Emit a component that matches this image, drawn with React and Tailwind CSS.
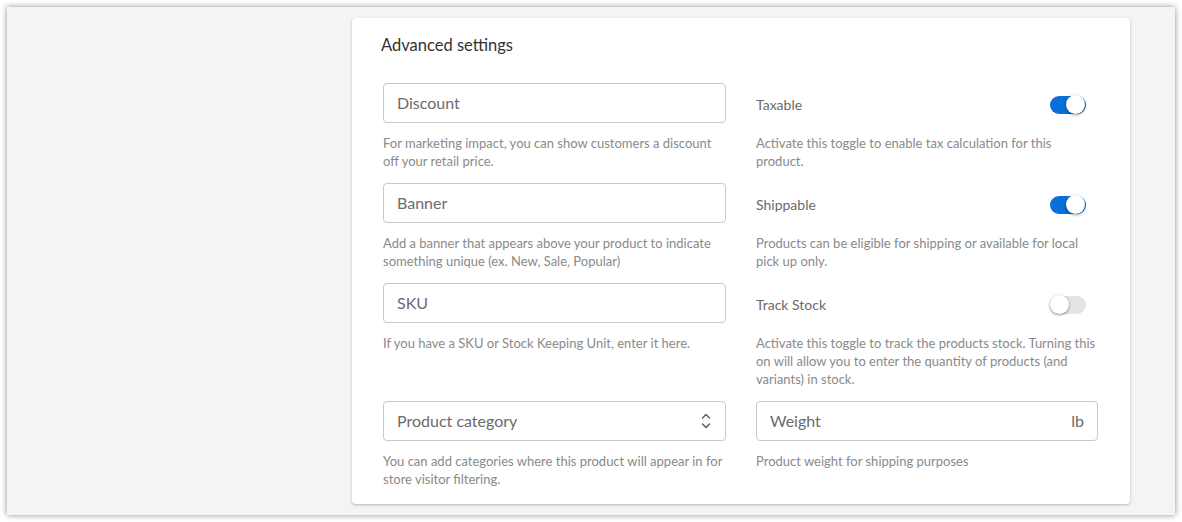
import React from 'react';

const Toggle = ({ on }) => (
  <div
    className={`relative h-[18px] w-[36px] rounded-full ${on ? 'bg-[#0a6fd8]' : 'bg-[#e4e4e4]'}`}
  >
    <div
      className={`absolute top-[-0.5px] h-[19px] w-[19px] rounded-full bg-white shadow-[0_1px_3px_rgba(0,0,0,0.45)] ${on ? 'right-[1px]' : 'left-0'}`}
    />
  </div>
);

const Help = ({ children }) => (
  <p className="mt-[11px] text-[13px] leading-[18px] text-[#8a8a8a]">{children}</p>
);

const Field = ({ label, right }) => (
  <div className="flex h-[40px] items-center justify-between rounded-[4px] border border-[#c8c8c8] bg-white px-[13px]">
    <span className="text-[16px] text-[#6b6b6b]">{label}</span>
    {right}
  </div>
);

const ToggleRow = ({ label, on }) => (
  <div className="flex h-[40px] items-center justify-between pr-[12px] pt-[3px]">
    <span className="-mt-[1px] text-[14px] text-[#6b6b6b]">{label}</span>
    <Toggle on={on} />
  </div>
);

const Chevrons = () => (
  <svg width="12" height="18" viewBox="0 0 12 18" fill="none" stroke="#666" strokeWidth="1.6" strokeLinecap="round" strokeLinejoin="round">
    <path d="M2.5 6 L6 2.5 L9.5 6" />
    <path d="M2.5 12 L6 15.5 L9.5 12" />
  </svg>
);

const App = () => {
  return (
    <div className="h-[522px] w-[1182px] bg-white p-[7px] font-['Lato',sans-serif]">
      <div className="h-[508px] bg-[#f4f4f4] pl-[345px] pr-[45px] pt-[11px] shadow-[0_0_6px_rgba(0,0,0,0.45)]">
        <div className="rounded-[4px] bg-white px-[31px] pb-[16px] pt-[16px] shadow-[0_1px_3px_rgba(0,0,0,0.25)]">
          <h2 className="-ml-[2px] text-[16.5px] leading-[22px] text-[#333]">Advanced settings</h2>

          <div className="mt-[27px] grid grid-cols-[343px_342px] gap-x-[30px] gap-y-[13px]">
            <div>
              <Field label="Discount" />
              <Help>For marketing impact, you can show customers a discount off your retail price.</Help>
            </div>
            <div>
              <ToggleRow label="Taxable" on />
              <Help>Activate this toggle to enable tax calculation for this product.</Help>
            </div>

            <div>
              <Field label="Banner" />
              <Help>Add a banner that appears above your product to indicate something unique (ex. New, Sale, Popular)</Help>
            </div>
            <div>
              <ToggleRow label="Shippable" on />
              <Help>Products can be eligible for shipping or available for local pick up only.</Help>
            </div>

            <div>
              <Field label="SKU" />
              <Help>If you have a SKU or Stock Keeping Unit, enter it here.</Help>
            </div>
            <div>
              <ToggleRow label="Track Stock" on={false} />
              <Help>Activate this toggle to track the products stock. Turning this on will allow you to enter the quantity of products (and variants) in stock.</Help>
            </div>

            <div>
              <Field label="Product category" right={<Chevrons />} />
              <Help>You can add categories where this product will appear in for store visitor filtering.</Help>
            </div>
            <div>
              <Field label="Weight" right={<span className="text-[16px] text-[#6b6b6b]">lb</span>} />
              <Help>Product weight for shipping purposes</Help>
            </div>
          </div>
        </div>
      </div>
    </div>
  );
};

export default App;
